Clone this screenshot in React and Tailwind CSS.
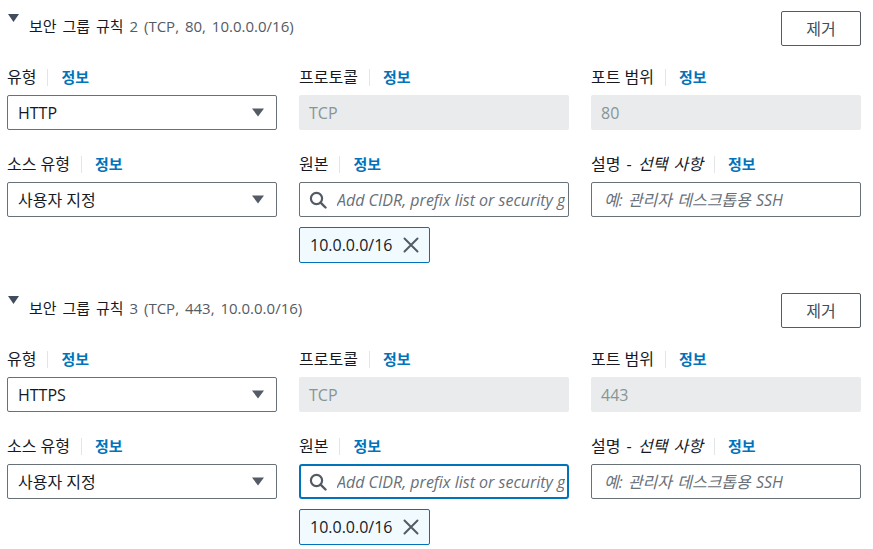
import React from "react";

const font = { fontFamily: '"Open Sans", "Noto Sans CJK KR", sans-serif' };

function Caret() {
  return (
    <svg width="11" height="8" viewBox="0 0 11 8" className="block">
      <path d="M0 0 H11 L5.5 8 Z" fill="#414d5c" />
    </svg>
  );
}

function SelectCaret() {
  return (
    <svg width="12" height="9" viewBox="0 0 12 9" className="block">
      <path d="M0 0.5 H12 L6 8.5 Z" fill="#545b64" />
    </svg>
  );
}

function SearchIcon() {
  return (
    <svg width="18" height="18" viewBox="0 0 18 18" className="block shrink-0">
      <circle cx="7.5" cy="7.5" r="5.6" fill="none" stroke="#545b64" strokeWidth="2.2" />
      <path d="M11.6 11.6 L16.5 16.5" stroke="#545b64" strokeWidth="2.4" strokeLinecap="round" />
    </svg>
  );
}

function XIcon() {
  return (
    <svg width="16" height="16" viewBox="0 0 16 16" className="block">
      <path d="M1.5 1.5 L14.5 14.5 M14.5 1.5 L1.5 14.5" stroke="#545b64" strokeWidth="2" strokeLinecap="round" />
    </svg>
  );
}

function Label({ children, wide }) {
  return (
    <div className="flex h-[22px] items-center text-[16px] text-[#16191f]">
      <span className={wide ? "whitespace-nowrap [word-spacing:2px]" : "whitespace-nowrap"}>{children}</span>
      <span className="ml-[11px] mr-[13px] h-[17px] w-px bg-[#e3e6e8]" />
      <span className="text-[15px] font-bold text-[#0073bb]">정보</span>
    </div>
  );
}

function SelectBox({ value }) {
  return (
    <div className="mt-[7px] flex h-[35px] items-center justify-between rounded-[2px] border border-[#687078] bg-white pl-[10px] pr-[12px] text-[16px] text-[#16191f]">
      <span>{value}</span>
      <SelectCaret />
    </div>
  );
}

function Disabled({ value }) {
  return (
    <div className="mt-[7px] flex h-[35px] items-center rounded-[2px] bg-[#e9ebed] pl-[10px] text-[16px] text-[#879596]">
      {value}
    </div>
  );
}

function SearchInput({ focused }) {
  return (
    <div
      className={
        focused
          ? "mt-[7px] flex h-[35px] items-center overflow-hidden rounded-[3px] border-2 border-[#0073bb] bg-white pl-[8px] pr-[2px]"
          : "mt-[7px] flex h-[35px] items-center overflow-hidden rounded-[2px] border border-[#687078] bg-white pl-[9px] pr-[3px]"
      }
    >
      <SearchIcon />
      <span className="ml-[10px] min-w-0 overflow-hidden whitespace-nowrap text-[16px] italic text-[#687078]">
        Add CIDR, prefix list or security group
      </span>
    </div>
  );
}

function Token() {
  return (
    <div className="mt-[10px] flex h-[36px] w-[131px] items-center justify-between rounded-[2px] border border-[#0073bb] bg-[#f1faff] pl-[10px] pr-[10px] text-[16px] text-[#16191f]">
      <span>10.0.0.0/16</span>
      <XIcon />
    </div>
  );
}

function Section({ num, type, port, focused }) {
  return (
    <section className="h-[282px] pl-[7px] pr-[12px] pt-[11px]">
      <div className="flex items-start justify-between">
        <div className="flex items-start">
          <div className="ml-[1px] mt-[3px]">
            <Caret />
          </div>
          <div className="ml-[10px] mt-[4px] text-[15px] leading-[22px] text-[#16191f] [word-spacing:2px]">
            보안 그룹 규칙{" "}
            <span className="text-[#545b64]">
              {num} (TCP, {port}, 10.0.0.0/16)
            </span>
          </div>
        </div>
        <div className="flex h-[35px] w-[80px] items-center justify-center rounded-[2px] border border-[#545b64] bg-white text-[16px] text-[#414d5c]">
          제거
        </div>
      </div>
      <div className="mt-[20px] grid w-[854px] grid-cols-3 gap-x-[22px] gap-y-[23px]">
        <div>
          <Label>유형</Label>
          <SelectBox value={type} />
        </div>
        <div>
          <Label>프로토콜</Label>
          <Disabled value="TCP" />
        </div>
        <div>
          <Label>포트 범위</Label>
          <Disabled value={port} />
        </div>
        <div>
          <Label>소스 유형</Label>
          <SelectBox value="사용자 지정" />
        </div>
        <div>
          <Label>원본</Label>
          <SearchInput focused={focused} />
          <Token />
        </div>
        <div>
          <Label wide>
            설명 - <i>선택 사항</i>
          </Label>
          <div className="mt-[7px] flex h-[35px] items-center rounded-[2px] border border-[#687078] bg-white pl-[12px] text-[16px] italic text-[#687078] [word-spacing:1px]">
            예: 관리자 데스크톱용 SSH
          </div>
        </div>
      </div>
    </section>
  );
}

export default function App() {
  return (
    <div className="h-[549px] w-[873px] overflow-hidden bg-white" style={font}>
      <Section num={2} type="HTTP" port="80" focused={false} />
      <Section num={3} type="HTTPS" port="443" focused={true} />
    </div>
  );
}
